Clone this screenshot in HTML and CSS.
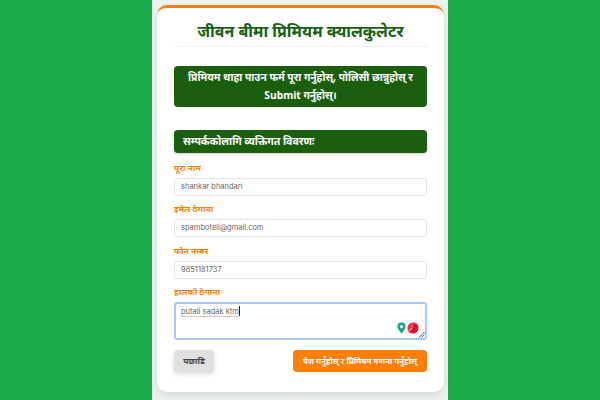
FILE: index.html
```html
<!DOCTYPE html>
<html lang="ne">
<head>
  <meta charset="UTF-8">
  <title>जीवन बीमा प्रिमियम क्यालकुलेटर</title>
  <link rel="stylesheet" href="styles.css">
</head>
<body>
  <div class="page">
    <div class="card">
      <h1>जीवन बीमा प्रिमियम क्यालकुलेटर</h1>
      <div class="notice">प्रिमियम थाहा पाउन फर्म पूरा गर्नुहोस्, पोलिसी छान्नुहोस् र Submit गर्नुहोस्।</div>
      <h2 class="section-title">सम्पर्ककोलागि व्यक्तिगत विवरणः</h2>

      <div class="field">
        <label>पूरा नाम</label>
        <div class="input">shankar bhandari</div>
      </div>
      <div class="field">
        <label>इमेल ठेगाना</label>
        <div class="input">spamboteli@gmail.com</div>
      </div>
      <div class="field">
        <label>फोन नम्बर</label>
        <div class="input">9851181737</div>
      </div>
      <div class="field">
        <label>हालको ठेगाना</label>
        <div class="textarea">
          <span class="typed">putali sadak ktm</span><span class="caret"></span>
          <div class="ext-icons">
            <svg width="9" height="12" viewBox="0 0 10 13"><path d="M5 0.5a4.500 4.500 0 0 1 4.500 4.500c0 2.800-2.800 4.500-4.500 7.500-1.700-3-4.500-4.700-4.500-7.500a4.500 4.500 0 0 1 4.500-4.500z" fill="#14a58c"/><circle cx="5" cy="5" r="1.800" fill="#fff"/></svg>
            <svg width="12" height="12" viewBox="0 0 12 12"><path d="M6 .5a5.500 5.500 0 0 1 5.500 5.500c0 3-2.500 5.500-5.500 5.500-2 0-4-1-5-2.500C3.500 9 5.500 7 5.500 4 5.500 2.500 5.500 1.500 6 .5z" fill="#d8142e"/><path d="M1 9c2-1 4-2.500 4.500-5 .1-1.500 0-2.500.5-3.500C3 .5.500 3 .500 6c0 1 .2 2.200.5 3z" fill="#e8324a"/></svg>
          </div>
          <svg class="grip" width="7" height="7" viewBox="0 0 7 7"><path d="M1 6.500L6.500 1M3.500 6.500L6.500 3.500" stroke="#555" stroke-width="1"/></svg>
        </div>
      </div>

      <div class="actions">
        <button class="btn-back">पछाडि</button>
        <button class="btn-submit">पेश गर्नुहोस् र प्रिमियम गणना गर्नुहोस्</button>
      </div>
    </div>
  </div>
</body>
</html>
```

FILE: styles.css
```css
* {
  box-sizing: border-box;
}

body {
  margin: 0;
  height: 400px;
  overflow: hidden;
  background-color: #1aab4b;
  font-family: "Noto Sans", "Lato", sans-serif;
}

.page {
  width: 296px;
  height: 400px;
  margin: 0 auto;
  padding: 5px 4px 0 5px;
  background-color: #edf1ef;
}

.card {
  height: 387px;
  padding: 0 17px;
  background-color: #fff;
  border-top: 3px solid #ff7f08;
  border-radius: 10px;
  box-shadow: 0 3px 8px rgba(0, 0, 0, 0.1);
}

h1 {
  height: 39px;
  margin: 0 0 19px;
  padding-top: 11px;
  border-bottom: 1px solid #eee;
  color: #1a6014;
  font-size: 16px;
  line-height: 24px;
  font-weight: 700;
  text-align: center;
}

.notice {
  height: 41px;
  margin-bottom: 23px;
  padding: 2px 4px;
  background-color: #1a5e0e;
  border-radius: 4px;
  color: #fff;
  font-size: 10.300px;
  line-height: 18px;
  font-weight: 700;
  text-align: center;
}

.section-title {
  height: 23px;
  margin: 0 0 8px;
  padding-left: 9px;
  background-color: #1a5e0e;
  border-radius: 4px;
  box-shadow: 0 1px 3px rgba(0, 0, 0, 0.2);
  color: #fff;
  font-size: 10.500px;
  line-height: 23px;
  font-weight: 700;
}

.field {
  margin-bottom: 6.300px;
}

label {
  display: block;
  height: 17px;
  color: #ff7f08;
  font-size: 8.500px;
  line-height: 14px;
  font-weight: 700;
}

.input {
  height: 18px;
  padding-left: 6px;
  background-color: #fff;
  border: 1px solid #e2e6ea;
  border-radius: 3px;
  color: #666;
  font-family: "Inter", sans-serif;
  font-size: 7.500px;
  line-height: 16px;
}

.textarea {
  position: relative;
  height: 38px;
  padding: 2px 5px;
  border: 2px solid #a6c8fb;
  border-radius: 3px;
  color: #666;
  font-family: "Inter", sans-serif;
  font-size: 7.500px;
  line-height: 12px;
}

.typed {
  border-bottom: 1px solid #f4b6c0;
}

.caret {
  display: inline-block;
  width: 1px;
  height: 10px;
  background-color: #222;
  vertical-align: -2px;
}

.ext-icons {
  position: absolute;
  right: 6px;
  bottom: 4px;
  display: flex;
  align-items: center;
  gap: 1px;
  padding: 0 0 0 2px;
  background-color: #f5f5f5;
  border-radius: 3px;
}

.grip {
  position: absolute;
  right: 0;
  bottom: 0;
}

.actions {
  display: flex;
  justify-content: space-between;
  margin-top: 10px;
}

button {
  height: 22px;
  padding: 0;
  border: none;
  border-radius: 4px;
  font-family: inherit;
  font-weight: 700;
}

.btn-back {
  width: 40px;
  background-color: #e0e0e0;
  color: #444;
  font-size: 8.500px;
  box-shadow: 0 2px 5px rgba(0, 0, 0, 0.15);
}

.btn-submit {
  width: 134px;
  background-color: #ff7f08;
  color: #fff;
  font-size: 8px;
}
```
